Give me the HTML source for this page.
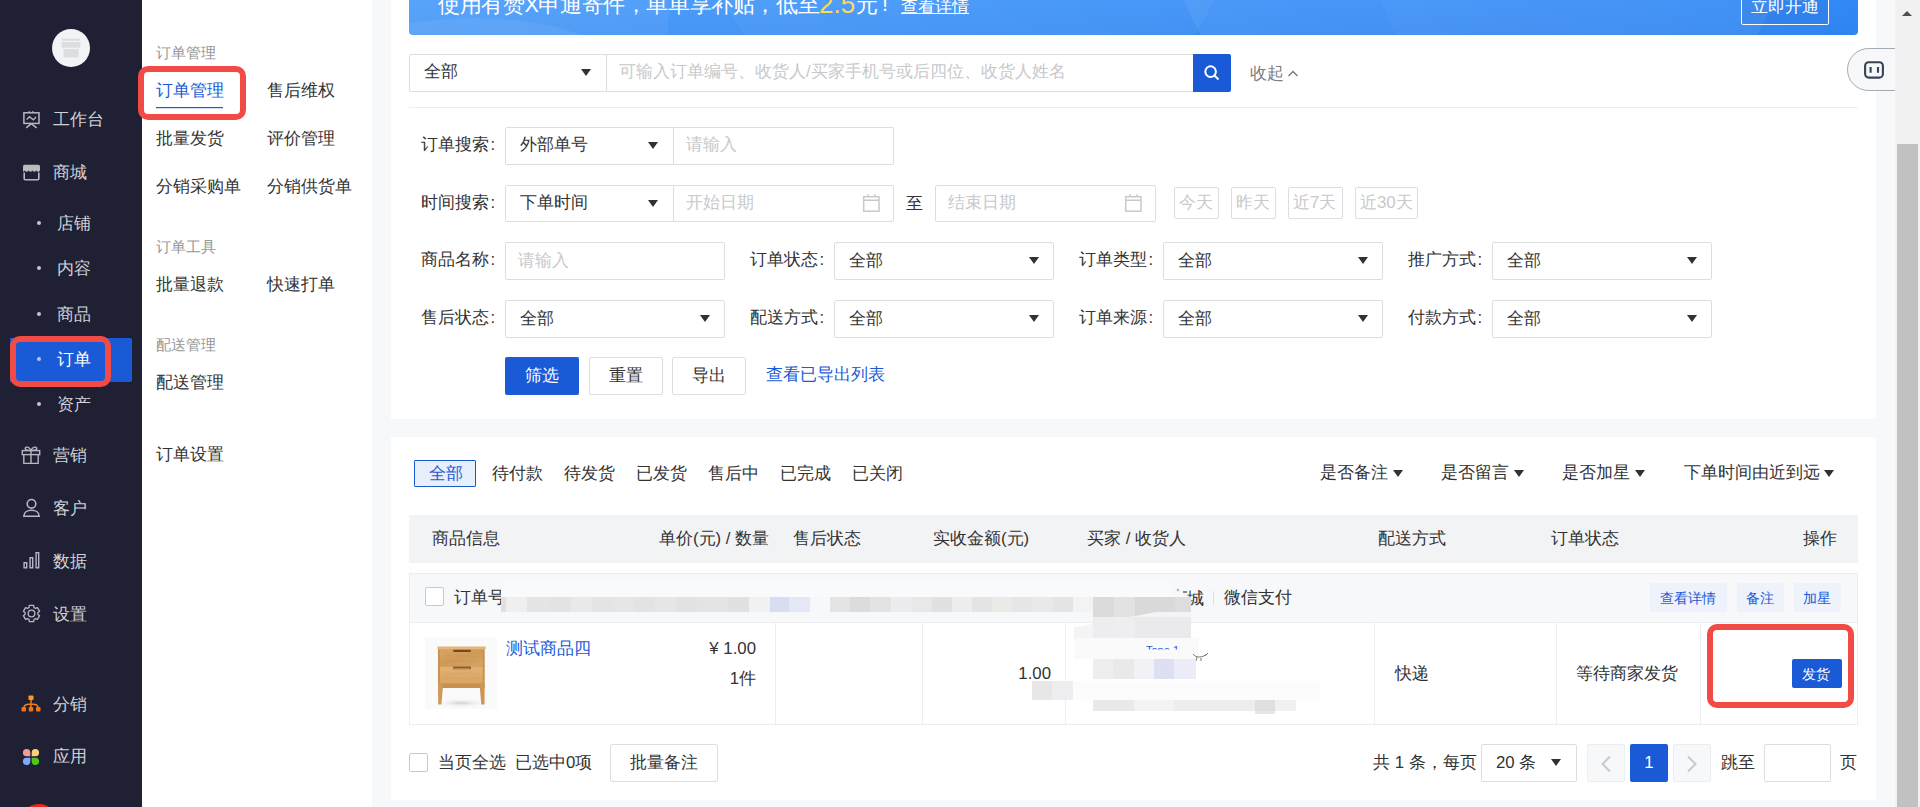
<!DOCTYPE html>
<html><head><meta charset="utf-8">
<style>
*{box-sizing:border-box;margin:0;padding:0}
html,body{width:1920px;height:807px;overflow:hidden}
body{position:relative;font-family:"Liberation Sans",sans-serif;font-size:16.8px;color:#323233;background:#f7f8fa}
.a{position:absolute}
.t{position:absolute;white-space:nowrap;line-height:20px}
#side{left:0;top:0;width:142px;height:807px;background:#1f2033}
#sub{left:142px;top:0;width:230px;height:807px;background:#fff}
.card{background:#fff}
.box{position:absolute;border:1px solid #dcdee0;border-radius:2px;background:#fff}
.tri{position:absolute;width:0;height:0;border-left:5.5px solid transparent;border-right:5.5px solid transparent;border-top:7px solid #323233}
.ph{color:#c8c9cc}
.lbl{color:#323233}
.mi{position:absolute;left:53px;color:#d0d1d7;font-size:16.8px;line-height:20px}
.si{position:absolute;left:57px;color:#d0d1d7;font-size:16.8px;line-height:20px}
.dot{position:absolute;left:37px;width:4px;height:4px;border-radius:2px;background:#c4c5ca}
.gt{position:absolute;left:156px;color:#969799;font-size:14.8px;line-height:18px}
.sl{position:absolute;color:#323233;font-size:16.8px;line-height:20px}
</style></head><body>
<div id="side" class="a"></div>
<div id="sub" class="a"></div>

<div class="a" style="left:52px;top:29px;width:38px;height:38px;border-radius:50%;background:#f2f3f5"></div>
<svg class="a" style="left:61px;top:38px" width="20" height="21" viewBox="0 0 20 21"><rect x="0.8" y="0.8" width="18.4" height="2" fill="#dcdde0"/><path d="M0.5 4h19v4.2c0 1.1-.9 1.8-1.9 1.8-1 0-1.9-.7-1.9-1.8 0 1.1-.9 1.8-1.9 1.8s-1.9-.7-1.9-1.8c0 1.1-.9 1.8-1.9 1.8S8.1 9.3 8.1 8.2c0 1.1-.9 1.8-1.9 1.8s-1.9-.7-1.9-1.8c0 1.1-.9 1.8-1.9 1.8S.5 9.3.5 8.2z" fill="#dcdde0"/><path d="M2.5 11h15v8.5h-15z" fill="#dcdde0"/></svg>
<!-- workbench icon -->
<svg class="a" style="left:22px;top:110px" width="19" height="19" viewBox="0 0 19 19" fill="none" stroke="#b6b7c2" stroke-width="1.5"><rect x="1.9" y="2.8" width="15.1" height="10.6"/><path d="M9.3 13.6L4.2 17.9M9.3 13.6l5.3 4.3M7.3 2.5V1.2M10.7 2.5V1.2"/><path d="M4.7 9.6L7.4 6.6 11.3 9.9 14 7" stroke-width="1.4"/></svg>
<div class="mi" style="top:110px">工作台</div>
<!-- store icon -->
<svg class="a" style="left:22px;top:163px" width="19" height="18" viewBox="0 0 19 18"><path d="M1 3.5c0-1 .8-1.8 1.8-1.8h13.4c1 0 1.8.8 1.8 1.8V7c0 1-.9 1.7-1.9 1.7-1 0-1.9-.7-1.9-1.7 0 1-.9 1.7-1.9 1.7S10.4 8 10.4 7c0 1-.9 1.7-1.9 1.7S6.6 8 6.6 7c0 1-.9 1.7-1.9 1.7S2.8 8 2.8 7c0 1-.9 1.7-1.8 1.7V3.5z" fill="#b9bac2"/><path d="M2.2 9.5v6.3c0 .5.4.9.9.9h12.8c.5 0 .9-.4.9-.9V9.5" fill="none" stroke="#b6b7c2" stroke-width="1.6"/></svg>
<div class="mi" style="top:163px">商城</div>
<div class="dot" style="top:221px"></div><div class="si" style="top:214px">店铺</div>
<div class="dot" style="top:266px"></div><div class="si" style="top:259px">内容</div>
<div class="dot" style="top:312px"></div><div class="si" style="top:305px">商品</div>
<div class="a" style="left:10px;top:338px;width:122px;height:44px;background:#1a5ad6;border-radius:0 2px 2px 0"></div>
<div class="a" style="left:10px;top:336px;width:101px;height:51px;border:6px solid #f24a45;border-radius:10px"></div>
<div class="dot" style="top:357px;background:#b7c9f5"></div><div class="si" style="top:350px;color:#fff">订单</div>
<div class="dot" style="top:402px"></div><div class="si" style="top:395px">资产</div>
<!-- gift -->
<svg class="a" style="left:21px;top:445px" width="20" height="20" viewBox="0 0 20 20" fill="none" stroke="#b6b7c2" stroke-width="1.4"><rect x="1.3" y="5.6" width="17.4" height="4"/><path d="M2.8 9.6V18.4h14.4V9.6M10 5.6v12.8M10 5.6C8.5 1.8 4.2 1 4.2 3.6 4.2 5 5.5 5.6 10 5.6zM10 5.6c1.5-3.8 5.8-4.6 5.8-2 0 1.4-1.3 2-5.8 2z"/></svg>
<div class="mi" style="top:446px">营销</div>
<!-- user -->
<svg class="a" style="left:22px;top:498px" width="19" height="20" viewBox="0 0 19 20" fill="none" stroke="#b6b7c2" stroke-width="1.6"><circle cx="9.5" cy="5.8" r="4.3"/><path d="M1.8 18.2c0-3.8 3.4-6 7.7-6s7.7 2.2 7.7 6z"/></svg>
<div class="mi" style="top:499px">客户</div>
<!-- data -->
<svg class="a" style="left:22px;top:551px" width="19" height="19" viewBox="0 0 19 19" fill="none" stroke="#b6b7c2" stroke-width="1.4"><rect x="2.1" y="11.7" width="2.6" height="5.1"/><rect x="8.1" y="6.7" width="2.6" height="10.1"/><rect x="14.1" y="1.7" width="2.6" height="15.1"/></svg>
<div class="mi" style="top:552px">数据</div>
<!-- gear -->
<svg class="a" style="left:21px;top:603px" width="21" height="21" viewBox="0 0 24 24" fill="none" stroke="#b6b7c2" stroke-width="1.5" stroke-linejoin="round"><path d="M9.23 5.14 L9.52 2.73 L14.48 2.73 L14.77 5.14 L16.56 6.17 L18.79 5.21 L21.27 9.52 L19.33 10.97 L19.33 13.03 L21.27 14.48 L18.79 18.79 L16.56 17.83 L14.77 18.86 L14.48 21.27 L9.52 21.27 L9.23 18.86 L7.44 17.83 L5.21 18.79 L2.73 14.48 L4.67 13.03 L4.67 10.97 L2.73 9.52 L5.21 5.21 L7.44 6.17Z"/><circle cx="12" cy="12" r="3.8"/></svg>
<div class="mi" style="top:605px">设置</div>
<!-- distribution -->
<svg class="a" style="left:21px;top:695px" width="20" height="18" viewBox="0 0 20 18"><rect x="7.5" y="0.5" width="5" height="4.5" rx="0.8" fill="#f99d1c"/><path d="M10 5v4M3 12.5c0-2.3 1.5-3.5 7-3.5s7 1.2 7 3.5M10 9v3.5" stroke="#f07f1a" stroke-width="1.5" fill="none"/><rect x="0.5" y="12" width="4.5" height="4.5" rx="1" fill="#f0731a"/><rect x="7.7" y="12" width="4.5" height="4.5" rx="1" fill="#f0731a"/><rect x="15" y="12" width="4.5" height="4.5" rx="1" fill="#f0731a"/></svg>
<div class="mi" style="top:695px">分销</div>
<!-- apps -->
<svg class="a" style="left:22px;top:748px" width="18" height="18" viewBox="0 0 18 18"><path d="M8.3 8.3H4.2A3.7 3.7 0 1 1 8.3 4.2z" fill="#f69a8f"/><path d="M9.7 8.3V4.2a3.7 3.7 0 1 1 4.1 4.1z" fill="#fccf7f"/><path d="M8.3 9.7v4.1A3.7 3.7 0 1 1 4.2 9.7z" fill="#7fa9f9"/><path d="M9.7 9.7h4.1a3.7 3.7 0 1 1-4.1 4.1z" fill="#52c41a"/></svg>
<div class="mi" style="top:747px">应用</div>
<div class="a" style="left:21px;top:804px;width:36px;height:36px;border-radius:50%;background:#e8261a"></div>

<div class="gt" style="top:44px">订单管理</div>
<div class="sl" style="left:156px;top:81px;color:#1a5ad6">订单管理</div>
<div class="a" style="left:156px;top:107px;width:67px;height:1px;background:#1a5ad6;box-shadow:0 0.5px 0 rgba(26,86,216,.4)"></div>
<div class="a" style="left:138px;top:66px;width:108px;height:54px;border:6px solid #f24a45;border-radius:10px"></div>
<div class="sl" style="left:267px;top:81px">售后维权</div>
<div class="sl" style="left:156px;top:129px">批量发货</div>
<div class="sl" style="left:267px;top:129px">评价管理</div>
<div class="sl" style="left:156px;top:177px">分销采购单</div>
<div class="sl" style="left:267px;top:177px">分销供货单</div>
<div class="gt" style="top:238px">订单工具</div>
<div class="sl" style="left:156px;top:275px">批量退款</div>
<div class="sl" style="left:267px;top:275px">快速打单</div>
<div class="gt" style="top:336px">配送管理</div>
<div class="sl" style="left:156px;top:373px">配送管理</div>
<div class="sl" style="left:156px;top:445px">订单设置</div>

<div class="a card" style="left:391px;top:0;width:1485px;height:419px"></div>
<!-- banner -->
<div class="a" style="left:409px;top:-40px;width:1449px;height:75px;border-radius:4px;overflow:hidden;background:linear-gradient(180deg,rgba(255,255,255,.05) 0%,rgba(255,255,255,0) 55%,rgba(0,40,140,.05) 100%),linear-gradient(90deg,#4f9ffb 0%,#4598f9 35%,#3a8ff8 70%,#2b86f5 100%)">
 <div class="a" style="left:-100px;top:58px;width:330px;height:140px;border-radius:50%;background:rgba(255,255,255,.07)"></div>
 <div class="a" style="left:-340px;top:-260px;width:600px;height:600px;border-radius:50%;background:rgba(255,255,255,.05)"></div>
 <div class="a" style="left:300px;top:-240px;width:520px;height:420px;border-radius:50%;background:rgba(255,255,255,.04)"></div>
 <div class="a" style="left:760px;top:-300px;width:620px;height:520px;border-radius:50%;background:rgba(255,255,255,.06)"></div>
 <div class="a" style="left:960px;top:-300px;width:520px;height:520px;border-radius:50%;background:rgba(255,255,255,.03)"></div>
</div>
</div>
<div class="t" style="left:438px;top:-8px;font-size:21.6px;line-height:26px;color:#fff;letter-spacing:-0.4px">使用有赞X申通寄件，单单享补贴，低至</div>
<div class="t" style="left:819px;top:-10px;font-size:26px;line-height:28px;color:#ffd95a">2.5</div>
<div class="t" style="left:856px;top:-8px;font-size:21.6px;line-height:26px;color:#fff">元</div>
<div class="t" style="left:882px;top:-9px;font-size:21.6px;line-height:26px;color:#fff">!</div>
<div class="t" style="left:901px;top:-3px;font-size:16.8px;line-height:20px;color:#fff;text-decoration:underline">查看详情</div>
<div class="a" style="left:1741px;top:-13px;width:88px;height:38px;border:1px solid #fff;border-radius:2px;background:rgba(10,60,150,.08)"></div>
<div class="t" style="left:1751px;top:-3px;font-size:16.8px;line-height:20px;color:#fff">立即开通</div>
<!-- search row -->
<div class="box" style="left:409px;top:54px;width:198px;height:38px"></div>
<div class="t" style="left:424px;top:62px">全部</div>
<div class="tri" style="left:581px;top:69px"></div>
<div class="box" style="left:606px;top:54px;width:588px;height:38px;border-radius:0"></div>
<div class="t ph" style="left:619px;top:62px">可输入订单编号、收货人/买家手机号或后四位、收货人姓名</div>
<div class="a" style="left:1193px;top:54px;width:38px;height:38px;background:#1a5ad6;border-radius:0 2px 2px 0"></div>
<svg class="a" style="left:1203px;top:64px" width="18" height="18" viewBox="0 0 18 18" fill="none" stroke="#fff" stroke-width="2"><circle cx="7.6" cy="7.6" r="5.3"/><path d="M11.5 11.5l4 4"/></svg>
<div class="t" style="left:1250px;top:63.5px;color:#7d7e80">收起</div>
<svg class="a" style="left:1287px;top:68.5px" width="12" height="9" viewBox="0 0 12 9" fill="none" stroke="#7d7e80" stroke-width="1.5"><path d="M1.5 7l4.5-4.5 4.5 4.5"/></svg>
<div class="a" style="left:409px;top:107px;width:1449px;height:1px;background:#ebedf0"></div>
<!-- chat widget -->
<div class="a" style="left:1847px;top:48px;width:80px;height:43px;border:1px solid #a5a9b0;border-radius:22px;background:#f7f8fa"></div>
<svg class="a" style="left:1863px;top:60px" width="22" height="20" viewBox="0 0 22 20" fill="none" stroke="#384355" stroke-width="2.1"><rect x="2.1" y="2.3" width="17.8" height="15.3" rx="3.6"/><path d="M7.6 7v5.7M15 7v5.7"/></svg>
<!-- row: 订单搜索 -->
<div class="t lbl" style="left:421px;top:135px">订单搜索<span style="margin-left:1.5px">:</span></div>
<div class="box" style="left:505px;top:127px;width:169px;height:38px;border-radius:2px 0 0 2px"></div>
<div class="t" style="left:520px;top:135px">外部单号</div>
<div class="tri" style="left:648px;top:142px"></div>
<div class="box" style="left:673px;top:127px;width:221px;height:38px;border-radius:0 2px 2px 0"></div>
<div class="t ph" style="left:686px;top:135px">请输入</div>
<!-- row: 时间搜索 -->
<div class="t lbl" style="left:421px;top:193px">时间搜索<span style="margin-left:1.5px">:</span></div>
<div class="box" style="left:505px;top:185px;width:169px;height:37px;border-radius:2px 0 0 2px"></div>
<div class="t" style="left:520px;top:193px">下单时间</div>
<div class="tri" style="left:648px;top:200px"></div>
<div class="box" style="left:673px;top:185px;width:221px;height:37px;border-radius:0 2px 2px 0"></div>
<div class="t ph" style="left:686px;top:193px">开始日期</div>
<svg class="a cal" style="left:862px;top:193px" width="19" height="20" viewBox="0 0 19 20" fill="none" stroke="#c8c9cc" stroke-width="1.5"><rect x="1.7" y="3.7" width="15.3" height="14.5"/><path d="M1.7 7.2h15.3M6 1.2v2.5M13 1.2v2.5"/></svg>
<div class="t lbl" style="left:906px;top:194px">至</div>
<div class="box" style="left:935px;top:185px;width:221px;height:37px"></div>
<div class="t ph" style="left:948px;top:193px">结束日期</div>
<svg class="a cal" style="left:1124px;top:193px" width="19" height="20" viewBox="0 0 19 20" fill="none" stroke="#c8c9cc" stroke-width="1.5"><rect x="1.7" y="3.7" width="15.3" height="14.5"/><path d="M1.7 7.2h15.3M6 1.2v2.5M13 1.2v2.5"/></svg>
<div class="box qb" style="left:1174px;top:187px;width:45px;height:32px"></div><div class="t ph" style="left:1179px;top:193px">今天</div>
<div class="box qb" style="left:1231px;top:187px;width:45px;height:32px"></div><div class="t ph" style="left:1236px;top:193px">昨天</div>
<div class="box qb" style="left:1288px;top:187px;width:55px;height:32px"></div><div class="t ph" style="left:1293px;top:193px">近7天</div>
<div class="box qb" style="left:1355px;top:187px;width:63px;height:32px"></div><div class="t ph" style="left:1360px;top:193px">近30天</div>
<div class="t lbl" style="left:421px;top:250px">商品名称<span style="margin-left:1.5px">:</span></div><div class="box" style="left:505px;top:242px;width:220px;height:38px"></div><div class="t ph" style="left:518px;top:251px">请输入</div><div class="t lbl" style="left:750px;top:250px">订单状态<span style="margin-left:1.5px">:</span></div><div class="box" style="left:834px;top:242px;width:220px;height:38px"></div><div class="t" style="left:849px;top:251px">全部</div><div class="tri" style="left:1029px;top:257px"></div><div class="t lbl" style="left:1079px;top:250px">订单类型<span style="margin-left:1.5px">:</span></div><div class="box" style="left:1163px;top:242px;width:220px;height:38px"></div><div class="t" style="left:1178px;top:251px">全部</div><div class="tri" style="left:1358px;top:257px"></div><div class="t lbl" style="left:1408px;top:250px">推广方式<span style="margin-left:1.5px">:</span></div><div class="box" style="left:1492px;top:242px;width:220px;height:38px"></div><div class="t" style="left:1507px;top:251px">全部</div><div class="tri" style="left:1687px;top:257px"></div><div class="t lbl" style="left:421px;top:308px">售后状态<span style="margin-left:1.5px">:</span></div><div class="box" style="left:505px;top:300px;width:220px;height:38px"></div><div class="t" style="left:520px;top:309px">全部</div><div class="tri" style="left:700px;top:315px"></div><div class="t lbl" style="left:750px;top:308px">配送方式<span style="margin-left:1.5px">:</span></div><div class="box" style="left:834px;top:300px;width:220px;height:38px"></div><div class="t" style="left:849px;top:309px">全部</div><div class="tri" style="left:1029px;top:315px"></div><div class="t lbl" style="left:1079px;top:308px">订单来源<span style="margin-left:1.5px">:</span></div><div class="box" style="left:1163px;top:300px;width:220px;height:38px"></div><div class="t" style="left:1178px;top:309px">全部</div><div class="tri" style="left:1358px;top:315px"></div><div class="t lbl" style="left:1408px;top:308px">付款方式<span style="margin-left:1.5px">:</span></div><div class="box" style="left:1492px;top:300px;width:220px;height:38px"></div><div class="t" style="left:1507px;top:309px">全部</div><div class="tri" style="left:1687px;top:315px"></div>
<div class="a" style="left:505px;top:357px;width:74px;height:38px;background:#1a5ad6;border-radius:2px"></div>
<div class="t" style="left:525px;top:366px;color:#fff">筛选</div>
<div class="box" style="left:589px;top:357px;width:74px;height:38px"></div><div class="t" style="left:609px;top:366px">重置</div>
<div class="box" style="left:672px;top:357px;width:74px;height:38px"></div><div class="t" style="left:692px;top:366px">导出</div>
<div class="t" style="left:766px;top:365px;color:#1a5ad6">查看已导出列表</div>

<div class="a card" style="left:391px;top:437px;width:1485px;height:363px"></div>
<div class="a" style="left:414px;top:460px;width:62px;height:27px;border:1px solid #1a5ad6;background:#e8effc;border-radius:1px"></div>
<div class="t" style="left:429px;top:464px;color:#1a5ad6">全部</div>
<div class="t" style="left:492px;top:464px">待付款</div>
<div class="t" style="left:564px;top:464px">待发货</div>
<div class="t" style="left:636px;top:464px">已发货</div>
<div class="t" style="left:708px;top:464px">售后中</div>
<div class="t" style="left:780px;top:464px">已完成</div>
<div class="t" style="left:852px;top:464px">已关闭</div>
<div class="t" style="left:1320px;top:463px">是否备注</div><div class="tri" style="left:1393px;top:470px"></div>
<div class="t" style="left:1441px;top:463px">是否留言</div><div class="tri" style="left:1514px;top:470px"></div>
<div class="t" style="left:1562px;top:463px">是否加星</div><div class="tri" style="left:1635px;top:470px"></div>
<div class="t" style="left:1684px;top:463px">下单时间由近到远</div><div class="tri" style="left:1824px;top:470px"></div>
<!-- table header -->
<div class="a" style="left:409px;top:515px;width:1449px;height:48px;background:#f2f3f5"></div>
<div class="t" style="left:432px;top:529px">商品信息</div>
<div class="t" style="left:659px;top:529px">单价(元) / 数量</div>
<div class="t" style="left:793px;top:529px">售后状态</div>
<div class="t" style="left:933px;top:529px">实收金额(元)</div>
<div class="t" style="left:1087px;top:529px">买家 / 收货人</div>
<div class="t" style="left:1378px;top:529px">配送方式</div>
<div class="t" style="left:1551px;top:529px">订单状态</div>
<div class="t" style="left:1803px;top:529px">操作</div>
<!-- order block -->
<div class="a" style="left:409px;top:573px;width:1449px;height:152px;border:1px solid #ebedf0"></div>
<div class="a" style="left:410px;top:574px;width:1447px;height:49px;background:#f7f8fa;border-bottom:1px solid #ebedf0"></div>
<div class="a" style="left:425px;top:587px;width:19px;height:19px;border:1px solid #c8c9cc;border-radius:2px;background:#fff"></div>
<div class="t" style="left:454px;top:588px">订单号</div>
<div class="t" style="left:1187px;top:589px">城</div><div class="a" style="left:1177px;top:589px;width:2px;height:2px;background:#aaa;transform:rotate(45deg)"></div><div class="a" style="left:1183px;top:591px;width:4px;height:1.5px;background:#888"></div>
<!-- blurred --><div class="a" style="left:501px;top:582px;width:672px;height:15px;background:#f9fafb"></div><div class="a" style="left:501px;top:597px;width:5px;height:15px;background:#e0e0e1"></div><div class="a" style="left:506px;top:597px;width:21px;height:15px;background:#efeff0"></div><div class="a" style="left:527px;top:597px;width:22px;height:15px;background:#e5e5e6"></div><div class="a" style="left:549px;top:597px;width:22px;height:15px;background:#e3e3e4"></div><div class="a" style="left:571px;top:597px;width:21px;height:15px;background:#e9e9ea"></div><div class="a" style="left:592px;top:597px;width:21px;height:15px;background:#e4e4e5"></div><div class="a" style="left:613px;top:597px;width:21px;height:15px;background:#e6e6e7"></div><div class="a" style="left:634px;top:597px;width:21px;height:15px;background:#e3e3e4"></div><div class="a" style="left:655px;top:597px;width:21px;height:15px;background:#e6e6e7"></div><div class="a" style="left:676px;top:597px;width:21px;height:15px;background:#e2e2e3"></div><div class="a" style="left:697px;top:597px;width:31px;height:15px;background:#e4e4e5"></div><div class="a" style="left:728px;top:597px;width:21px;height:15px;background:#e1e1e2"></div><div class="a" style="left:749px;top:597px;width:21px;height:15px;background:#f1f1f2"></div><div class="a" style="left:770px;top:597px;width:19px;height:15px;background:#d9ddf1"></div><div class="a" style="left:789px;top:597px;width:21px;height:15px;background:#e3e7f6"></div><div class="a" style="left:830px;top:597px;width:20px;height:15px;background:#e4e4e5"></div><div class="a" style="left:850px;top:597px;width:20px;height:15px;background:#dcdcdd"></div><div class="a" style="left:870px;top:597px;width:21px;height:15px;background:#e3e3e4"></div><div class="a" style="left:891px;top:597px;width:21px;height:15px;background:#ececee"></div><div class="a" style="left:912px;top:597px;width:20px;height:15px;background:#e8e8e9"></div><div class="a" style="left:932px;top:597px;width:20px;height:15px;background:#e1e1e2"></div><div class="a" style="left:952px;top:597px;width:20px;height:15px;background:#ededee"></div><div class="a" style="left:972px;top:597px;width:20px;height:15px;background:#e4e4e5"></div><div class="a" style="left:992px;top:597px;width:20px;height:15px;background:#eaeae8"></div><div class="a" style="left:1012px;top:597px;width:20px;height:15px;background:#e6e6e7"></div><div class="a" style="left:1032px;top:597px;width:21px;height:15px;background:#e9e9ea"></div><div class="a" style="left:1053px;top:597px;width:20px;height:15px;background:#e4e4e5"></div><div class="a" style="left:1073px;top:597px;width:20px;height:15px;background:#f3f3f4"></div><div class="a" style="left:1093px;top:597px;width:21px;height:21px;background:#dbdbdc"></div><div class="a" style="left:1114px;top:597px;width:21px;height:21px;background:#e2e2e3"></div><div class="a" style="left:1135px;top:597px;width:40px;height:21px;background:#d9d9da"></div><div class="a" style="left:1175px;top:597px;width:16px;height:21px;background:#dddddd"></div>

<div class="a" style="left:1213px;top:591px;width:1px;height:14px;background:#dcdee0"></div>
<div class="t" style="left:1224px;top:588px">微信支付</div>
<div class="a" style="left:1650px;top:583px;width:77px;height:29px;background:#edf2fb;border-radius:2px"></div><div class="t" style="left:1660px;top:587.5px;font-size:14.4px;color:#1a5ad6">查看详情</div>
<div class="a" style="left:1737px;top:583px;width:47px;height:29px;background:#edf2fb;border-radius:2px"></div><div class="t" style="left:1746px;top:587.5px;font-size:14.4px;color:#1a5ad6">备注</div>
<div class="a" style="left:1794px;top:583px;width:47px;height:29px;background:#edf2fb;border-radius:2px"></div><div class="t" style="left:1803px;top:587.5px;font-size:14.4px;color:#1a5ad6">加星</div>
<!-- product row -->
<div class="a" style="left:775px;top:622px;width:1px;height:102px;background:#ebedf0"></div>
<div class="a" style="left:922px;top:622px;width:1px;height:102px;background:#ebedf0"></div>
<div class="a" style="left:1065px;top:622px;width:1px;height:102px;background:#ebedf0"></div>
<div class="a" style="left:1374px;top:622px;width:1px;height:102px;background:#ebedf0"></div>
<div class="a" style="left:1556px;top:622px;width:1px;height:102px;background:#ebedf0"></div>
<div class="a" style="left:1700px;top:622px;width:1px;height:102px;background:#ebedf0"></div>
<svg class="a" style="left:425px;top:637px" width="72" height="72" viewBox="0 0 72 72">
 <defs><radialGradient id="sh" cx="0.5" cy="0.5" r="0.5"><stop offset="0" stop-color="#d0d0d0"/><stop offset="1" stop-color="#f8f8f8" stop-opacity="0"/></radialGradient>
 <linearGradient id="wd1" x1="0" y1="0" x2="1" y2="1"><stop offset="0" stop-color="#d9a460"/><stop offset=".5" stop-color="#cf9a57"/><stop offset="1" stop-color="#d6a466"/></linearGradient>
 <linearGradient id="wd2" x1="0" y1="0" x2="0" y2="1"><stop offset="0" stop-color="#e2b174"/><stop offset="1" stop-color="#d9a464"/></linearGradient></defs>
 <rect width="72" height="72" rx="2" fill="#fafafa"/>
 <ellipse cx="36" cy="66" rx="28" ry="4.5" fill="url(#sh)"/>
 <rect x="12.3" y="9.5" width="48.5" height="3" rx="1" fill="#e6b77d"/>
 <rect x="13" y="12.3" width="46.7" height="34.5" fill="#c8904e"/>
 <rect x="14.8" y="12.8" width="43" height="16.2" fill="url(#wd1)"/>
 <rect x="14.8" y="29.6" width="43" height="16.4" fill="url(#wd2)"/>
 <path d="M20 18c8 2 18-1 34 3M18 24c10-2 20 2 36 0" stroke="#c38c4c" stroke-width=".5" fill="none" opacity=".6"/>
 <path d="M19 36c10 1 22-1 36 1M18 41c12-1 24 2 37 0" stroke="#cb9654" stroke-width=".5" fill="none" opacity=".6"/>
 <rect x="28.3" y="12.8" width="17.5" height="2.2" fill="#6e4a28"/>
 <rect x="28.3" y="29.6" width="17.5" height="2.6" fill="#7a5530"/>
 <rect x="29.3" y="30.8" width="15.5" height="1.2" fill="#b98448"/>
 <rect x="13" y="46.5" width="46.7" height="4.5" fill="#c98f4c"/>
 <path d="M13 46.5h5.2l-1.8 21H13.2z" fill="#d09855"/>
 <path d="M59.7 46.5h-5.2l1.8 21h3.2z" fill="#cf9652"/>
</svg>
<div class="t" style="left:506px;top:639px;color:#1a5ad6">测试商品四</div>
<div class="t" style="left:708px;top:639px;width:48px;text-align:right">¥&nbsp;1.00</div>
<div class="t" style="left:708px;top:669px;width:48px;text-align:right">1件</div>
<div class="t" style="left:990px;top:664px;width:61px;text-align:right">1.00</div>
<div class="a" style="left:1074px;top:612px;width:117px;height:26px;background:#f4f4f6;clip-path:polygon(0 100%,0 60%,70% 0,100% 0,100% 50%,50% 100%)"></div><div class="a" style="left:1093px;top:617px;width:21px;height:21px;background:#ededef"></div><div class="a" style="left:1114px;top:617px;width:21px;height:21px;background:#eeeef0"></div><div class="a" style="left:1135px;top:617px;width:56px;height:21px;background:#eaeaec"></div><div class="a" style="left:1074px;top:638px;width:125px;height:21px;background:#fafafa"></div><div class="t" style="left:1146px;top:644px;font-size:11px;line-height:12px;color:#1a5ad6;height:12px;overflow:hidden;clip-path:inset(0 0 55% 0)">Tone 1</div><svg class="a" style="left:1192px;top:652px" width="17" height="10" viewBox="0 0 17 10" fill="none" stroke="#777" stroke-width="1"><path d="M1 2c3 4 9 4 14 0M5 5l-1 4M9 6v3M13 4l3-3"/></svg><div class="a" style="left:1093px;top:659px;width:20px;height:20px;background:#eeeeee"></div><div class="a" style="left:1113px;top:659px;width:21px;height:20px;background:#e9e9e9"></div><div class="a" style="left:1134px;top:659px;width:20px;height:20px;background:#f2f2f6"></div><div class="a" style="left:1154px;top:659px;width:20px;height:20px;background:#dce0f2"></div><div class="a" style="left:1174px;top:659px;width:22px;height:20px;background:#ebecf7"></div><div class="a" style="left:1032px;top:681px;width:20px;height:19px;background:#e8e7e6"></div><div class="a" style="left:1052px;top:681px;width:21px;height:19px;background:#eeeef0"></div><div class="a" style="left:1073px;top:681px;width:247px;height:19px;background:#fcfcfc"></div><div class="a" style="left:1093px;top:700px;width:41px;height:11px;background:#e9e9ea"></div><div class="a" style="left:1134px;top:700px;width:40px;height:11px;background:#f3f3f1"></div><div class="a" style="left:1174px;top:700px;width:81px;height:11px;background:#ededee"></div><div class="a" style="left:1255px;top:700px;width:20px;height:11px;background:#dfdfdf"></div><div class="a" style="left:1275px;top:700px;width:21px;height:11px;background:#f0f0ef"></div><div class="a" style="left:1255px;top:711px;width:20px;height:3px;background:#e6e6e6"></div>
<div class="t" style="left:1395px;top:664px">快递</div>
<div class="t" style="left:1576px;top:664px">等待商家发货</div>
<div class="a" style="left:1792px;top:659px;width:50px;height:29px;background:#1a5ad6;border-radius:2px"></div>
<div class="t" style="left:1802px;top:663.5px;font-size:14.4px;color:#fff">发货</div>
<div class="a" style="left:1707px;top:624px;width:147px;height:84px;border:6px solid #f24a45;border-radius:10px"></div>
<!-- footer -->
<div class="a" style="left:409px;top:753px;width:19px;height:19px;border:1px solid #c8c9cc;border-radius:2px;background:#fff"></div>
<div class="t" style="left:438px;top:753px">当页全选</div>
<div class="t" style="left:515px;top:753px">已选中0项</div>
<div class="box" style="left:610px;top:744px;width:108px;height:38px"></div>
<div class="t" style="left:630px;top:753px">批量备注</div>
<div class="t" style="left:1373px;top:753px">共 1 条，每页</div>
<div class="box" style="left:1481px;top:744px;width:96px;height:38px"></div>
<div class="t" style="left:1496px;top:753px">20 条</div>
<div class="tri" style="left:1551px;top:759px"></div>
<div class="box" style="left:1587px;top:744px;width:38px;height:38px;background:#f7f8fa;border-color:#ebedf0"></div>
<svg class="a" style="left:1599px;top:755px" width="14" height="18" viewBox="0 0 14 18" fill="none" stroke="#c8c9cc" stroke-width="2"><path d="M11 1.5L3.5 9l7.5 7.5"/></svg>
<div class="a" style="left:1630px;top:744px;width:38px;height:38px;background:#1a5ad6;border-radius:2px"></div>
<div class="t" style="left:1630px;top:753px;width:38px;text-align:center;color:#fff">1</div>
<div class="box" style="left:1673px;top:744px;width:38px;height:38px;background:#f7f8fa;border-color:#ebedf0"></div>
<svg class="a" style="left:1685px;top:755px" width="14" height="18" viewBox="0 0 14 18" fill="none" stroke="#c8c9cc" stroke-width="2"><path d="M3 1.5L10.5 9 3 16.5"/></svg>
<div class="t" style="left:1721px;top:753px">跳至</div>
<div class="box" style="left:1764px;top:744px;width:67px;height:38px"></div>
<div class="t" style="left:1840px;top:753px">页</div>
<!-- scrollbar -->
<div class="a" style="left:1895px;top:0;width:25px;height:807px;background:#f1f1f1"></div>
<div class="a" style="left:1902px;top:11px;width:0;height:0;border-left:5.5px solid transparent;border-right:5.5px solid transparent;border-bottom:5.5px solid #505050"></div>
<div class="a" style="left:1897px;top:144px;width:21px;height:663px;background:#c1c1c1"></div>
</body></html>
